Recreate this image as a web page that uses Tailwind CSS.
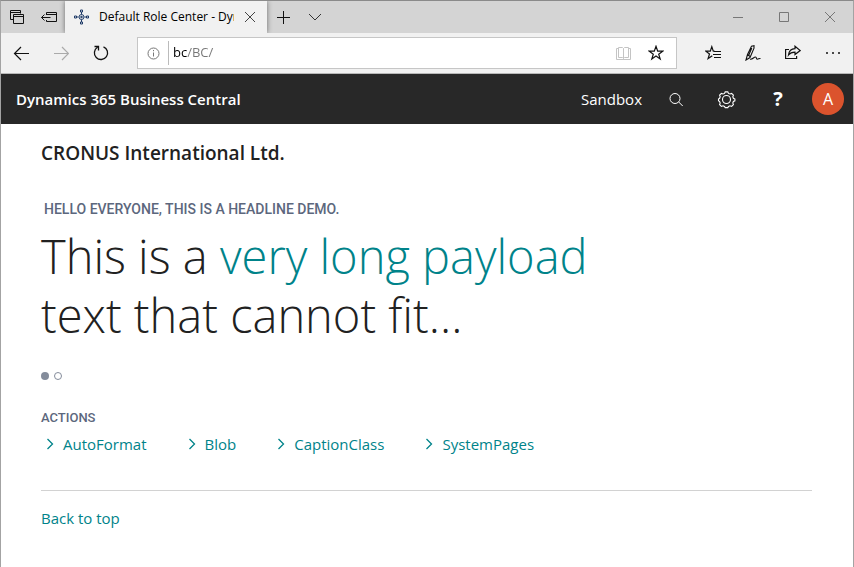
<!DOCTYPE html>
<html lang="en">
<head>
    <meta charset="UTF-8">
    <meta name="viewport" content="width=device-width, initial-scale=1.0">
    <title>Default Role Center - Dynamics 365 Business Central</title>
    <script src="https://cdn.jsdelivr.net/npm/@tailwindcss/browser@4"></script>
</head>
<body class="min-h-screen flex flex-col border-x border-t border-x-[#a3a3a3] border-t-[#8a8a8a] bg-white font-['Open_Sans','Noto_Sans',sans-serif] text-[#212121]">

    <!-- Tab strip -->
    <div class="flex h-8 bg-[#d4d4d4]">
        <div class="flex w-16 items-center gap-4 pl-2">
            <button aria-label="Tabs set aside" class="size-4">
                <svg class="size-4" viewBox="0 0 16 16" fill="none" stroke="#111"><path d="M4.500 10.500h-3v-9h10v3M1.500 3.500h10M4.500 5.500h10v9h-10zM4.500 7.500h10"/></svg>
            </button>
            <button aria-label="Set tabs aside" class="size-4">
                <svg class="size-4" viewBox="0 0 16 16" fill="none" stroke="#111"><path d="M5.500 6V3.500h10v9h-10V11M5.500 5.500h10M0.500 8.500h9M3.500 5.500l-3 3 3 3"/></svg>
            </button>
        </div>
        <div class="z-10 flex w-[202px] items-center bg-[#f1f1f1] pl-2 shadow-[0_0_5px_rgba(0,0,0,0.5)] [clip-path:inset(0_-6px_0_-6px)]">
            <svg class="size-4 shrink-0" viewBox="0 0 16 16" fill="none" stroke="#1f3b68"><path d="M8.500 3v2.500M8.500 10.500V13M3 8h2.500M11.500 8H13"/><circle cx="8.500" cy="8" r="2.500"/><circle cx="8.500" cy="8" r="0.800" fill="#1f3b68"/><path d="M7.500 1h2v2h-2zM7.500 13h2v2h-2zM1.500 7h2v2h-2zM13.500 7h2v2h-2z"/></svg>
            <span class="ml-2.5 w-[135px] overflow-hidden whitespace-nowrap text-xs text-black">Default Role Center - Dynamics 365</span>
            <button aria-label="Close tab" class="ml-2">
                <svg class="size-4" viewBox="0 0 16 16" fill="none" stroke="#444"><path d="M3 3l10 10M13 3L3 13"/></svg>
            </button>
        </div>
        <div class="flex items-center gap-4 pl-2">
            <button aria-label="New tab"><svg class="size-4" viewBox="0 0 16 16" fill="none" stroke="#111"><path d="M2 8.500h13M8.500 2v13"/></svg></button>
            <button aria-label="Tab previews"><svg class="size-4" viewBox="0 0 16 16" fill="none" stroke="#333"><path d="M2 5l6 6 6-6"/></svg></button>
        </div>
        <div class="ml-auto flex items-center gap-[30px] pr-[15px]">
            <button aria-label="Minimize"><svg class="size-4" viewBox="0 0 16 16" fill="none" stroke="#777"><path d="M3 8.500h10"/></svg></button>
            <button aria-label="Maximize"><svg class="size-4" viewBox="0 0 16 16" fill="none" stroke="#777"><path d="M3.500 3.500h9v9h-9z"/></svg></button>
            <button aria-label="Close"><svg class="size-4" viewBox="0 0 16 16" fill="none" stroke="#777"><path d="M3 3l10 10M13 3L3 13"/></svg></button>
        </div>
    </div>

    <!-- Address bar -->
    <div class="flex h-[41px] items-center border-b border-[#b8b8b8] bg-[#f1f1f1]">
        <div class="flex w-[136px] items-center gap-6 pl-3">
            <button aria-label="Back"><svg class="size-4" viewBox="0 0 16 16" fill="none" stroke="#111" stroke-width="1.200"><path d="M1.500 8.500H16M8 2L1.500 8.500 8 15"/></svg></button>
            <button aria-label="Forward"><svg class="size-4" viewBox="0 0 16 16" fill="none" stroke="#aaa" stroke-width="1.200"><path d="M1 8.500h14.500M9 2l6.500 6.500L9 15"/></svg></button>
            <button aria-label="Refresh"><svg class="size-4" viewBox="0 0 16 16" fill="none" stroke="#111" stroke-width="1.300"><path d="M10.500 1.800A6.600 6.600 0 1 1 4.500 2.300M1.500 1.500h4v4"/></svg></button>
        </div>
        <div class="flex h-8 grow items-center border border-[#c6c6c6] bg-white pr-3">
            <svg class="ml-2 size-4 shrink-0" viewBox="0 0 16 16" fill="none" stroke="#777"><circle cx="7.500" cy="8.500" r="5.500"/><path d="M7.500 7.500v4M7.500 5v1.200"/></svg>
            <span class="ml-1.5 h-6 w-px shrink-0 bg-[#bbb]"></span>
            <input aria-label="Address" type="text" value="bc/BC/" class="ml-1 w-full min-w-0 bg-[linear-gradient(90deg,#000_14px,#767676_14px)] bg-clip-text text-[13px] text-transparent outline-none">
            <button aria-label="Reading view" class="shrink-0"><svg class="size-4" viewBox="0 0 16 16" fill="none" stroke="#c4c4c4"><path d="M7.500 3.500v10M2.500 2.500h4l1 1 1-1h4v10h-4l-1 1-1-1h-4zM2.500 3.500h-2v11h14v-11h-2"/></svg></button>
            <button aria-label="Add to favorites" class="ml-4 shrink-0"><svg class="size-4" viewBox="0 0 16 16" fill="none" stroke="#111" stroke-width="1.200"><path d="M8 1.300l1.700 4.900h5l-4 3 1.500 4.900L8 11.100l-4.200 3 1.500-4.900-4-3h5z"/></svg></button>
        </div>
        <div class="flex items-center gap-6 pr-3 pl-7">
            <button aria-label="Favorites"><svg class="size-4" viewBox="0 0 16 16" fill="none" stroke="#111" stroke-width="1.200"><path d="M9.500 6.200H8.300L6.800 1.700 5.300 6.200H.800l3.700 2.700-1.400 4.700 4.200-2.900M9 6.500h7M8 9.500h8M9 12.500h7"/></svg></button>
            <button aria-label="Add notes"><svg class="size-4" viewBox="0 0 16 16" fill="none" stroke="#111" stroke-width="1.100"><path d="M1 15l1.500-5.500L6.500 1.200 9 .700v2.500L5 12.500zM2.500 9.500L5 11.500M6.800 3L3.800 10M5 14.200c3 .500 3.500-2.300 5.500-2.200 1.500.1.300 2.200 2 2.200 1 0 1.500-1 3-.700"/></svg></button>
            <button aria-label="Share"><svg class="size-4" viewBox="0 0 16 16" fill="none" stroke="#111" stroke-width="1.200"><path d="M4 4.500H.600v9h11v-2.500"/><path d="M10 1.200L15.200 5.500 10 9.500V7.200C7 7.200 5 8 3.500 10 4 6 6.500 3.700 10 3.600z"/></svg></button>
            <button aria-label="Settings and more"><svg class="size-4" viewBox="0 0 16 16" fill="#111"><circle cx="2" cy="8" r="1"/><circle cx="8" cy="8" r="1"/><circle cx="14" cy="8" r="1"/></svg></button>
        </div>
    </div>

    <!-- App header -->
    <header class="flex h-[50px] items-center bg-[#282828] pr-[9px] pl-[15px] text-white">
        <a href="#" class="text-[15px] leading-5 font-semibold">Dynamics 365 Business Central</a>
        <span class="ml-auto text-[15px] leading-5">Sandbox</span>
        <button aria-label="Search" class="ml-6"><svg class="size-5" viewBox="0 0 20 20" fill="none" stroke="#fff"><circle cx="9" cy="9.500" r="5"/><path d="M12.700 13l4 4"/></svg></button>
        <button aria-label="Settings" class="ml-[31px]"><svg class="size-5" viewBox="0 0 20 20" fill="none" stroke="#fff" stroke-width="1.100"><circle cx="9.500" cy="10.500" r="4"/><path d="M8.200 2.900h2.600l.7 1.500 1.500.6 1.600-.6 1.800 1.800-.6 1.600.6 1.500 1.500.7v1.800l-1.500.7-.6 1.500.6 1.600-1.800 1.800-1.600-.6-1.500.6-.7 1.200H8.200l-.7-1.200-1.500-.6-1.600.6-1.800-1.800.6-1.600-.6-1.500L1.500 11.800V10l1.100-.7.600-1.500-.6-1.600 1.800-1.800 1.600.6 1.500-.6z"/></svg></button>
        <button aria-label="Help" class="ml-[31px] w-5 text-center text-xl leading-5 font-bold">?</button>
        <button aria-label="Account" class="ml-6 size-8 rounded-full bg-[#db532d] text-base">A</button>
    </header>

    <!-- Role center -->
    <main class="pt-[15px] pr-[41px] pb-8 pl-10">
        <h1 class="text-[19px] leading-7 font-semibold">CRONUS International Ltd.</h1>

        <section class="mt-8">
            <h2 class="pl-[3px] font-[Roboto,sans-serif] text-sm leading-5 font-medium text-[#5c677d] uppercase">Hello everyone, this is a headline demo.</h2>
            <p class="mt-2 text-[47px] leading-[59px] font-light">This is a <a href="#" class="text-[#00838a]">very long payload</a><br>text that cannot fit...</p>
            <div class="mt-[27px] flex gap-[5px]">
                <button aria-label="Headline 1" class="size-2 rounded-full bg-[#848c9b]"></button>
                <button aria-label="Headline 2" class="size-2 rounded-full border border-[#848c9b]"></button>
            </div>
        </section>

        <section class="mt-7">
            <h2 class="font-[Roboto,sans-serif] text-[13px] leading-5 font-medium text-[#5c677d] uppercase">Actions</h2>
            <nav class="mt-1 flex gap-10 pl-1 text-[15px] leading-6 text-[#00838a]">
                <a href="#" class="flex items-center gap-1.5"><svg class="size-3" viewBox="0 0 12 12" fill="none" stroke="currentColor" stroke-width="1.300"><path d="M2.500 1l5 5-5 5"/></svg>AutoFormat</a>
                <a href="#" class="flex items-center gap-1.5"><svg class="size-3" viewBox="0 0 12 12" fill="none" stroke="currentColor" stroke-width="1.300"><path d="M2.500 1l5 5-5 5"/></svg>Blob</a>
                <a href="#" class="flex items-center gap-1.5"><svg class="size-3" viewBox="0 0 12 12" fill="none" stroke="currentColor" stroke-width="1.300"><path d="M2.500 1l5 5-5 5"/></svg>CaptionClass</a>
                <a href="#" class="flex items-center gap-1.5"><svg class="size-3" viewBox="0 0 12 12" fill="none" stroke="currentColor" stroke-width="1.300"><path d="M2.500 1l5 5-5 5"/></svg>SystemPages</a>
            </nav>
        </section>

        <footer class="mt-[34px] border-t border-[#d2d2d2] pt-[15px]">
            <a href="#" class="text-[15px] leading-6 text-[#00838a]">Back to top</a>
        </footer>
    </main>
</body>
</html>
